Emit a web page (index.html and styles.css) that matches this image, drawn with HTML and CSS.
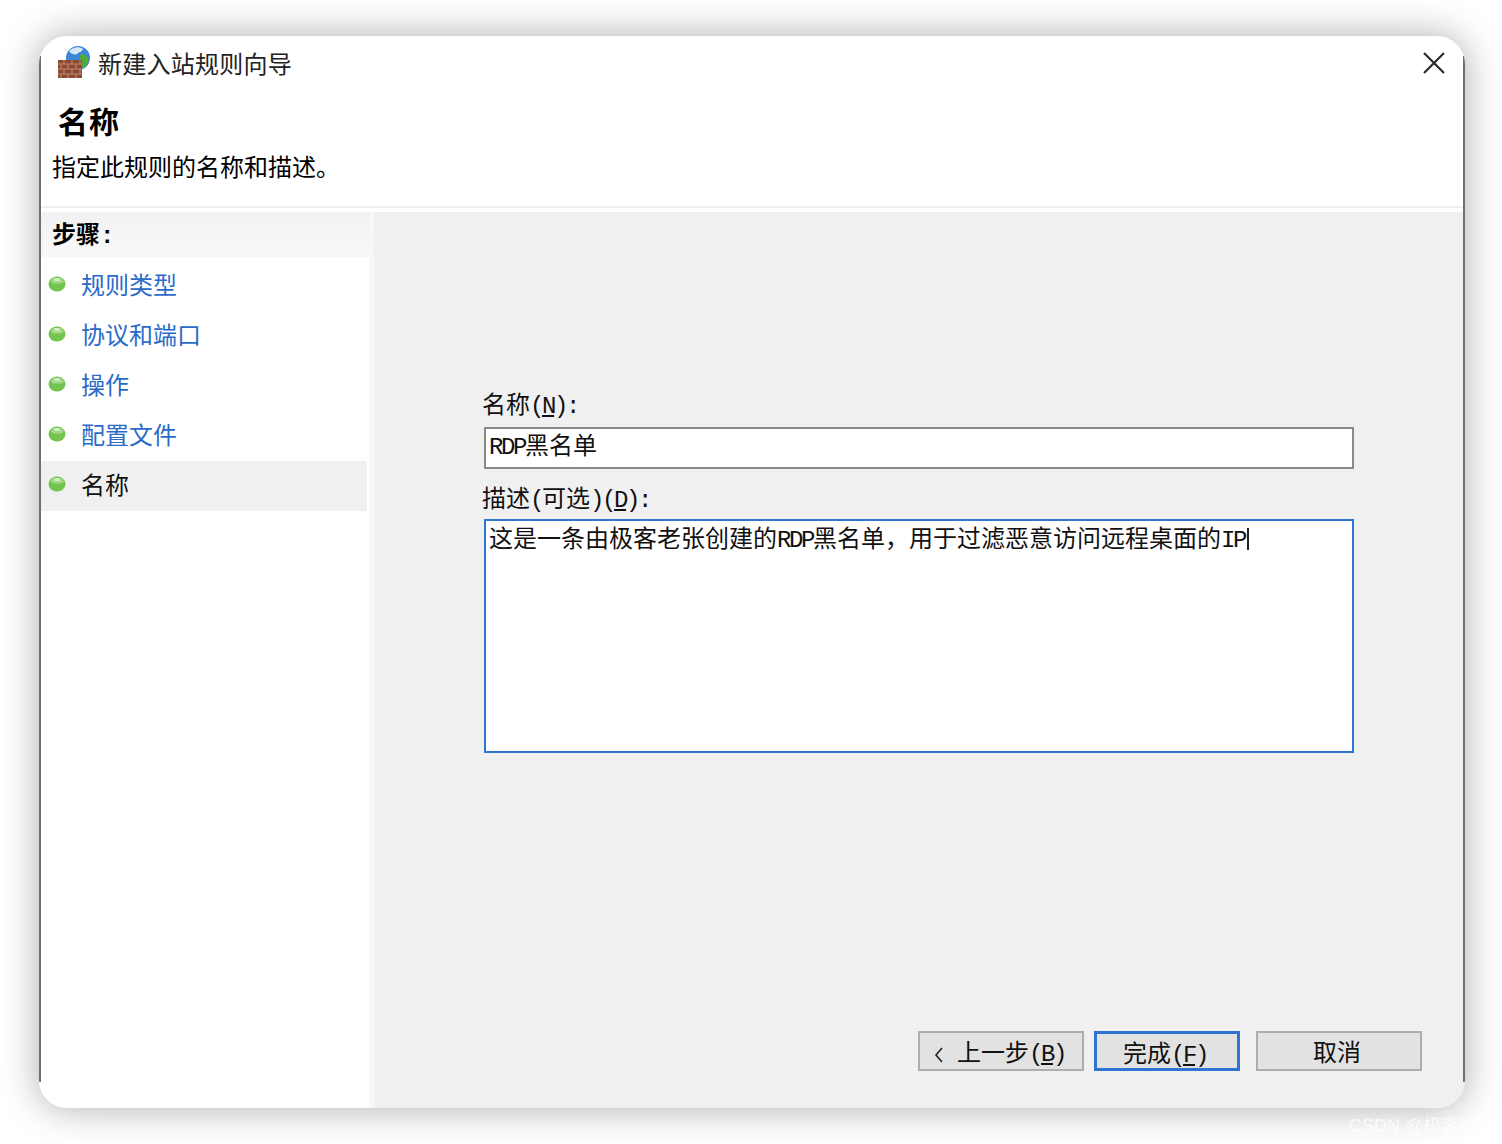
FILE: index.html
```html
<!DOCTYPE html>
<html lang="zh-CN">
<head>
  <meta charset="UTF-8" />
  <title>新建入站规则向导</title>
  <link rel="stylesheet" href="styles.css">
</head>
<body>

<svg class="defs" width="0" height="0">
  <symbol id="dot" viewBox="0 0 18 16">
    <ellipse cx="9" cy="8" rx="8.5" ry="7.5" fill="#72c44e"/>
    <path d="M5 2h8l3 4-3 1.500H6L3 6z" fill="#a4d88a"/>
    <path d="M6 2h5l1 3H7z" fill="#d4ebc8"/>
  </symbol>
</svg>

<div class="window">
  <div class="head">
    <div class="titlebar">
      <svg class="app-icon" viewBox="0 0 34 34">
        <circle cx="21" cy="13" r="12" fill="#3d86d8"/>
        <path d="M12 6c4-4 10-5 14-2-1 3-4 3-6 5-2 1-5 1-8-3z" fill="#d4e8f8"/>
        <path d="M24 9c4 0 7 3 8 6-1 4-3 7-6 8-3-2-4-4-4-7 0-3 0-5 2-7z" fill="#53a83c"/>
        <rect x="1" y="15" width="24" height="18" fill="#8c4a34"/>
        <path d="M1 19h24M1 24h24M1 29h24M7 15v4M15 15v4M23 15v4M4 19v5M11 19v5M19 19v5M7 24v5M15 24v5M23 24v5M4 29v4M11 29v4M19 29v4" stroke="#c08a70" stroke-width="1"/>
      </svg>
      <span class="title">新建入站规则向导</span>
      <svg class="close" viewBox="0 0 22 22"><path d="M1 1l20 20M21 1L1 21" stroke="#2b2b2b" stroke-width="2.2" fill="none"/></svg>
    </div>
    <h1>名称</h1>
    <p class="subtitle">指定此规则的名称和描述。</p>
  </div>

  <div class="body">
    <div class="steps">
      <div class="steps-head">步骤<span class="latin">:</span></div>
      <ul>
        <li><svg class="dot"><use href="#dot"/></svg><a>规则类型</a></li>
        <li><svg class="dot"><use href="#dot"/></svg><a>协议和端口</a></li>
        <li><svg class="dot"><use href="#dot"/></svg><a>操作</a></li>
        <li><svg class="dot"><use href="#dot"/></svg><a>配置文件</a></li>
        <li class="current"><svg class="dot"><use href="#dot"/></svg><span>名称</span></li>
      </ul>
    </div>

    <div class="main">
      <form class="form">
        <label>名称<span class="latin">(<u>N</u>):</span></label>
        <div class="field name"><span class="latin">RDP</span>黑名单</div>
        <label>描述<span class="latin">(</span>可选<span class="latin">)(<u>D</u>):</span></label>
        <div class="field desc">这是一条由极客老张创建的<span class="latin">RDP</span>黑名单，用于过滤恶意访问远程桌面的<span class="latin">IP</span><i class="caret"></i></div>
      </form>
      <div class="buttons">
        <button type="button" class="btn back"><svg class="chev" viewBox="0 0 10 16"><path d="M8 1L2 8l6 7" stroke="#222" stroke-width="1.6" fill="none"/></svg>上一步<span class="latin">(<u>B</u>)</span></button>
        <button type="button" class="btn primary">完成<span class="latin">(<u>F</u>)</span></button>
        <button type="button" class="btn">取消</button>
      </div>
    </div>
  </div>
</div>

<div class="watermark">CSDN @极客老张</div>

</body>
</html>
```

FILE: styles.css
```css
html, body { height:100%; }
body {
  margin:0; background:#fff; overflow:hidden; position:relative;
  font-family:"Noto Sans CJK SC", "Liberation Sans", sans-serif;
  font-size:24px; color:#111;
}
.defs { position:absolute; }
.latin { font-family:"Liberation Mono", "Noto Sans CJK SC", monospace; font-size:24px; letter-spacing:-2.4px; }

.window {
  width:1426px; height:1072px; margin:36px 0 0 39px;
  background:#fff; border-radius:28px; position:relative; overflow:hidden;
  display:flex; flex-direction:column;
  box-shadow:0 0 38px rgba(0,0,0,.33);
}
.window::before, .window::after {
  content:""; position:absolute; top:20px; bottom:26px; width:2px; background:#6f6f6f; z-index:2;
}
.window::before { left:0; }
.window::after { right:0; }

.head { height:170px; padding-left:13px; border-bottom:2px solid #f0f0f0; }
.titlebar { display:flex; align-items:center; height:56px; padding-left:5px; }
.app-icon { width:34px; height:34px; margin-top:-4px; }
.title { margin-left:7px; line-height:54px; height:56px; letter-spacing:.25px; color:#222; }
.close { width:22px; height:22px; margin-left:auto; margin-right:20px; margin-top:-2px; }
h1 { margin:10px 0 0 6px; font-size:30px; line-height:36px; font-weight:700; letter-spacing:1px; color:#000; }
.subtitle { margin:10px 0 0; line-height:36px; color:#000; }

.body { flex:1; display:flex; margin-top:4px; min-height:0; }
.steps { width:330px; box-sizing:border-box; padding-left:2px; background:#fff; }
.steps-head {
  height:45px; line-height:41px; padding-left:11px; font-weight:700; color:#000;
  background:linear-gradient(#f2f2f2, #f8f8f8);
}
.steps ul { list-style:none; margin:4px 0 0; padding:0; }
.steps li { display:flex; align-items:center; height:50px; width:326px; }
.dot { width:18px; height:16px; margin:-4px 0 0 7px; flex:none; }
.steps li a, .steps li span { margin-left:15px; margin-top:-5px; }
.steps li a { color:#2a6bc9; }
.steps li.current { background:#f0f0f0; color:#111; }

.main { flex:1; background:#f0f0f0; display:flex; flex-direction:column; border-left:5px solid #f7f7f7; }
.form { padding:173px 0 0 110px; display:flex; flex-direction:column; }
.form label { line-height:36px; height:36px; margin-left:-2px; }
.field { background:#fff; box-sizing:border-box; border:2px solid #8a8a8a; padding:0 3px; width:870px; }
.field.name { height:42px; line-height:30px; margin:6px 0 10px; }
.field.desc { height:234px; line-height:32px; border-color:#2f78cf; margin-top:4px; white-space:nowrap; }
.caret { display:inline-block; width:2px; height:22px; background:#222; vertical-align:-3px; margin-left:2px; }

.buttons { margin-top:auto; padding:0 43px 37px 0; display:flex; justify-content:flex-end; }
.btn {
  width:166px; height:40px; margin-left:16px; padding:0 4px 0 0;
  font:inherit; line-height:36px; color:#111;
  background:#e2e2e2; border:2px solid #adadad;
}
.btn.back { padding:0 0 0 14px; text-align:left; }
.chev { width:10px; height:16px; margin-right:13px; vertical-align:-2px; }
.btn.primary { width:146px; margin-left:10px; border:3px solid #2f74d0; }
.watermark {
  position:absolute; left:1349px; top:1111px; font:18px "Liberation Sans", "Noto Sans CJK SC", sans-serif;
  color:rgba(255,255,255,.75); white-space:nowrap;
}
```
